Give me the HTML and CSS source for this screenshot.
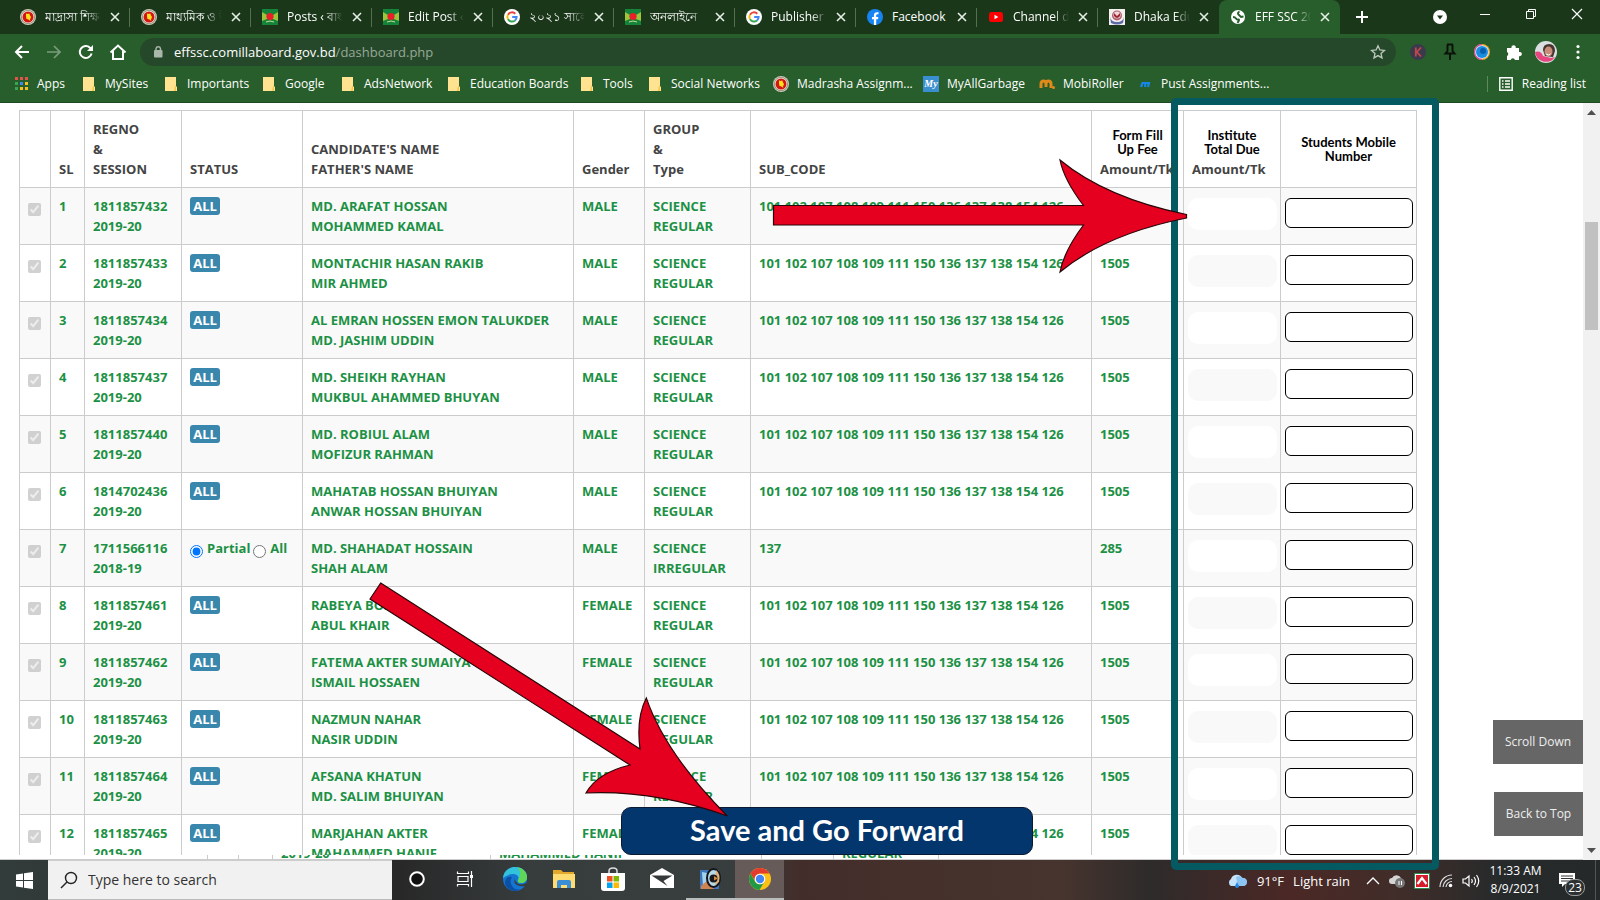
FILE: index.html
```html
<!DOCTYPE html>
<html lang="en">
<head>
<meta charset="utf-8">
<title>EFF SSC 2021</title>
<link rel="stylesheet" href="styles.css">
</head>
<body>
<svg class="defs" width="0" height="0" aria-hidden="true">
  <symbol id="seal" viewBox="0 0 16 16"><circle cx="8" cy="8" r="8" fill="#cfcabd"/><circle cx="8" cy="8" r="7" fill="#8c8a70"/><circle cx="8" cy="8" r="6.200" fill="#f3ece0"/><circle cx="8" cy="8" r="5.500" fill="#d3150f"/><path d="M6 4.500l2 .6 1.200-.8.8 2.200 1 1.500-1 2.500.3 1.500L8.500 10.500 6.500 10 6 7.500z" fill="#ffe01f"/></symbol>
  <symbol id="flag" viewBox="0 0 16 16"><path fill="#14843a" d="M0 0h16v16H0z"/><path d="M0 3l5 3h6l5-3v9l-5-2H5l-5 2z" fill="#9bc53a"/><circle cx="8" cy="7.500" r="3.600" fill="#e8202a"/><path d="M4 13q4-2 8 0" stroke="#c8dc90" fill="none"/></symbol>
  <symbol id="goog" viewBox="0 0 16 16"><circle cx="8" cy="8" r="8" fill="#fff"/><g fill="none" stroke-width="2"><path d="M11.300 4.700A4.600 4.600 0 0 0 4 5.700" stroke="#ea4335"/><path d="M4 5.700a4.600 4.600 0 0 0 0 4.600" stroke="#fbbc05"/><path d="M4 10.300a4.600 4.600 0 0 0 7 1.100" stroke="#34a853"/><path d="M11 11.400A4.500 4.500 0 0 0 12.600 8H8.200" stroke="#4285f4"/></g></symbol>
  <symbol id="x" viewBox="0 0 10 10"><path d="M1 1l8 8M9 1l-8 8" stroke="#e6efe6" stroke-width="1.600" fill="none"/></symbol>
  <symbol id="folder" viewBox="0 0 12 14"><path d="M0 0h11v9l1 1v4H0z" fill="#ffe391"/><path d="M11 9v5h-2l1-5z" fill="#f5c64e"/></symbol>
</svg>

<header class="chrome">
  <div class="tabstrip">
    <nav class="tabs" aria-label="Tabs">
      <div class="tab"><svg class="fav"><use href="#seal"/></svg><span class="tab-title">মাদ্রাসা শিক্ষা</span><button class="tab-x" aria-label="Close"><svg><use href="#x"/></svg></button></div>
      <div class="tab"><svg class="fav"><use href="#seal"/></svg><span class="tab-title">মাধ্যমিক ও উচ্চ</span><button class="tab-x" aria-label="Close"><svg><use href="#x"/></svg></button></div>
      <div class="tab"><svg class="fav"><use href="#flag"/></svg><span class="tab-title">Posts ‹ বাংলা</span><button class="tab-x" aria-label="Close"><svg><use href="#x"/></svg></button></div>
      <div class="tab"><svg class="fav"><use href="#flag"/></svg><span class="tab-title">Edit Post ‹ বা</span><button class="tab-x" aria-label="Close"><svg><use href="#x"/></svg></button></div>
      <div class="tab"><svg class="fav"><use href="#goog"/></svg><span class="tab-title">২০২১ সালের</span><button class="tab-x" aria-label="Close"><svg><use href="#x"/></svg></button></div>
      <div class="tab"><svg class="fav"><use href="#flag"/></svg><span class="tab-title">অনলাইনে</span><button class="tab-x" aria-label="Close"><svg><use href="#x"/></svg></button></div>
      <div class="tab"><svg class="fav"><use href="#goog"/></svg><span class="tab-title">Publisher Center</span><button class="tab-x" aria-label="Close"><svg><use href="#x"/></svg></button></div>
      <div class="tab"><svg class="fav" viewBox="0 0 16 16"><circle cx="8" cy="8" r="8" fill="#1684f2"/><path d="M6.900 16V10.300H5V8h1.900V6.300c0-2 1.200-3.100 3-3.100l1.600.1v2h-1c-1 0-1.300.6-1.300 1.200V8h2.200l-.4 2.300H9.200V16z" fill="#fff"/></svg><span class="tab-title plain">Facebook</span><button class="tab-x" aria-label="Close"><svg><use href="#x"/></svg></button></div>
      <div class="tab"><svg class="fav" viewBox="0 0 16 16"><rect x="1" y="3" width="14" height="10" rx="2.500" fill="#f00"/><path d="M6.500 5.800v4.400L10.300 8z" fill="#fff"/></svg><span class="tab-title">Channel dashboard</span><button class="tab-x" aria-label="Close"><svg><use href="#x"/></svg></button></div>
      <div class="tab last"><svg class="fav" viewBox="0 0 16 16"><path fill="#f5f1f1" d="M0 0h16v16H0z"/><path d="M1 8q1 5 7 5t7-5l-1 6q-6 3-12 0z" fill="#5c6aa8"/><circle cx="8" cy="6.500" r="5" fill="#b0606c"/><circle cx="8" cy="6" r="3.600" fill="#ecdada"/><path d="M5 4v3q3 4 6 0V4L8 7z" fill="#a02636"/></svg><span class="tab-title">Dhaka Education</span><button class="tab-x" aria-label="Close"><svg><use href="#x"/></svg></button></div>
      <div class="tab active"><svg class="fav" viewBox="0 0 16 16"><circle cx="8" cy="8" r="7" fill="#fff"/><path d="M3 8q2 0 3 1.500t2.500 1-1 3.500M9.500 2.500Q7 4 8.500 5.500T11 8l2.500-.5" fill="none" stroke="#285e2b" stroke-width="1.900"/></svg><span class="tab-title">EFF SSC 2021</span><button class="tab-x" aria-label="Close"><svg><use href="#x"/></svg></button></div>
    </nav>
    <button class="newtab" aria-label="New tab"><svg width="14" height="14" viewBox="0 0 14 14"><path d="M7 1v12M1 7h12" stroke="#fff" stroke-width="2"/></svg></button>
    <div class="winctl">
      <button aria-label="Search tabs"><svg width="16" height="20" viewBox="0 0 16 20"><circle cx="9" cy="13" r="7" fill="#fff"/><path d="M6 11.500h6L9 15.500z" fill="#1b371b"/></svg></button>
      <button aria-label="Minimize"><svg width="12" height="12" viewBox="0 0 12 12"><path d="M1 6.500h10" stroke="#fff"/></svg></button>
      <button aria-label="Restore"><svg width="12" height="12" viewBox="0 0 12 12"><path d="M1.500 3.500h7v7h-7zM3.500 3.500v-2h7v7h-2" fill="none" stroke="#fff"/></svg></button>
      <button aria-label="Close window"><svg width="12" height="12" viewBox="0 0 12 12"><path d="M1 1l10 10M11 1L1 11" stroke="#fff" stroke-width="1.200"/></svg></button>
    </div>
  </div>

  <div class="toolbar">
    <button aria-label="Back"><svg width="16" height="16" viewBox="0 0 16 16"><path d="M15 8H2M8 2L2 8l6 6" fill="none" stroke="#fff" stroke-width="2"/></svg></button>
    <button aria-label="Forward"><svg width="16" height="16" viewBox="0 0 16 16"><path d="M1 8h13M8 2l6 6-6 6" fill="none" stroke="#7c9d7d" stroke-width="1.700"/></svg></button>
    <button aria-label="Reload"><svg width="16" height="16" viewBox="0 0 16 16"><path d="M13.600 9.500A6 6 0 1 1 12 3.700l1.500 1.500" fill="none" stroke="#fff" stroke-width="2"/><path d="M15 1v6H9z" fill="#fff"/></svg></button>
    <button aria-label="Home"><svg width="18" height="16" viewBox="0 0 18 16"><path d="M1.500 8.500L9 1.500l7.500 7M4 7v8h10V7" fill="none" stroke="#fff" stroke-width="2"/></svg></button>
    <div class="omnibox"><svg width="10" height="13" viewBox="0 0 10 13"><rect x="1" y="5" width="8.500" height="7.500" rx="1" fill="#a9b8aa"/><path d="M3 5V3.500a2.300 2.300 0 0 1 4.500 0V5" fill="none" stroke="#a9b8aa" stroke-width="1.400"/></svg>
      <span class="url">effssc.comillaboard.gov.bd<span>/dashboard.php</span></span>
      <svg width="16" height="16" viewBox="0 0 16 16"><path d="M8 1.800l1.900 4.200 4.500.4-3.400 3 1 4.500L8 11.600l-4 2.300 1-4.500-3.400-3 4.500-.4z" fill="none" stroke="#bccabd" stroke-width="1.300"/></svg></div>
    <div class="ext">
      <svg viewBox="0 0 18 18"><circle cx="9" cy="9" r="8" fill="#3b3a4c"/><path d="M6.800 4.500v9M12 4.500L7.800 9l4.200 4.500" stroke="#c0474b" stroke-width="1.800" fill="none"/></svg>
      <svg viewBox="0 0 18 18"><path d="M6 1.500h6M6.500 1.500V8L4.500 10.500h9L11.500 8V1.500M9 10.500V17" fill="none" stroke="#0a120a" stroke-width="2"/></svg>
      <svg viewBox="0 0 18 18"><circle cx="9" cy="9" r="8" fill="#f4a52b"/><path d="M9 1a8 8 0 0 0 0 16z" fill="#d44ba0"/><circle cx="9" cy="9" r="6.800" fill="#d8effa"/><circle cx="9" cy="9" r="6" fill="#1b8de0"/><circle cx="10" cy="8" r="3" fill="#0c5fae"/></svg>
      <svg viewBox="0 0 18 18"><path d="M2 5h4.500a2.200 2.200 0 1 1 4.200 0H14v4a2.200 2.200 0 1 1 0 4.200V17h-4a2.200 2.200 0 0 0-4.300 0H2v-4a2.200 2.200 0 0 0 0-4z" fill="#fff"/></svg>
      <svg class="avatar" viewBox="0 0 22 22"><circle cx="11" cy="11" r="11" fill="#d9dfe0"/><path d="M0 11q6-2 8 4l8 2 4-1a11 11 0 0 1-20-5z" fill="#e8457f"/><path d="M8 9q0-6 6-6t6 7l-2 6-8-1z" fill="#47332f"/><ellipse cx="13.500" cy="10.500" rx="4" ry="5" fill="#c98c78"/><path d="M11 13q2.500 2 4.500 0" stroke="#fff" fill="none"/></svg>
      <svg viewBox="0 0 18 18"><g fill="#fff"><circle cx="9" cy="3.500" r="1.600"/><circle cx="9" cy="9" r="1.600"/><circle cx="9" cy="14.500" r="1.600"/></g></svg>
    </div>
  </div>

  <nav class="bookmarks" aria-label="Bookmarks">
    <a href="#"><svg width="14" height="14" viewBox="0 0 14 14"><path d="M0 0h3v3H0zM5 0h3v3H5zM10 0h3v3h-3z" fill="#e5534b"/><path d="M0 5h3v3H0z" fill="#34a853"/><path d="M5 5h3v3H5z" fill="#4285f4"/><path d="M10 5h3v3h-3z" fill="#f6bf26"/><path d="M0 10h3v3H0z" fill="#34a853"/><path d="M5 10h3v3H5zM10 10h3v3h-3z" fill="#f6bf26"/></svg>Apps</a>
    <a href="#"><svg class="fold"><use href="#folder"/></svg>MySites</a>
    <a href="#"><svg class="fold"><use href="#folder"/></svg>Importants</a>
    <a href="#"><svg class="fold"><use href="#folder"/></svg>Google</a>
    <a href="#"><svg class="fold"><use href="#folder"/></svg>AdsNetwork</a>
    <a href="#"><svg class="fold"><use href="#folder"/></svg>Education Boards</a>
    <a href="#"><svg class="fold"><use href="#folder"/></svg>Tools</a>
    <a href="#"><svg class="fold"><use href="#folder"/></svg>Social Networks</a>
    <a href="#"><svg class="fav"><use href="#seal"/></svg>Madrasha Assignm...</a>
    <a href="#"><span class="my">My</span>MyAllGarbage</a>
    <a href="#"><svg class="fav" viewBox="0 0 16 16"><path d="M2 12V8q0-3 2.500-3T7 8v3M7 8q0-3 2.500-3T12 8v4" fill="none" stroke="#e08a1b" stroke-width="3"/><circle cx="14.500" cy="11.500" r="1.500" fill="#e08a1b"/></svg>MobiRoller</a>
    <a href="#"><svg class="fav" viewBox="0 0 16 16"><path d="M4 11l1.500-4h3L8 11M8.500 7h3.500l-1 4" fill="none" stroke="#1685e8" stroke-width="2.200"/></svg>Pust Assignments...</a>
    <a href="#" class="reading"><svg width="14" height="14" viewBox="0 0 14 14"><path d="M.8.8h12.400v12.400H.8z" fill="none" stroke="#fff" stroke-width="1.400"/><path d="M3 4h1.500M3 7h1.500M3 10h1.500M6 4h5M6 7h5M6 10h5" stroke="#fff" stroke-width="1.400"/></svg>Reading list</a>
  </nav>
</header>

<main class="page">
  <div class="content">
    <div class="table-view">
      <table class="grid">
        <colgroup><col class="c-check"><col class="c-sl"><col class="c-reg"><col class="c-status"><col class="c-name"><col class="c-gender"><col class="c-group"><col class="c-sub"><col class="c-fee"><col class="c-due"><col class="c-mobile"></colgroup>
        <thead><tr><th></th><th>SL</th><th>REGNO<br>&amp;<br>SESSION</th><th>STATUS</th><th>CANDIDATE'S NAME<br>FATHER'S NAME</th><th>Gender</th><th>GROUP<br>&amp;<br>Type</th><th>SUB_CODE</th><th><span class="cap">Form Fill<br>Up Fee</span>Amount/Tk</th><th><span class="cap">Institute<br>Total Due</span>Amount/Tk</th><th class="mid"><span class="cap">Students Mobile<br>Number</span></th></tr></thead>
        <tbody>
          <tr><td><input type="checkbox" checked disabled aria-label="Select 1"></td><td>1</td><td>1811857432<br>2019-20</td><td><span class="badge">ALL</span></td><td>MD. ARAFAT HOSSAN<br>MOHAMMED KAMAL</td><td>MALE</td><td>SCIENCE<br>REGULAR</td><td>101 102 107 108 109 111 150 136 137 138 154 126</td><td>1505</td><td class="in"><input class="due" aria-label="Institute due 1"></td><td class="in"><input class="mob" aria-label="Mobile 1"></td></tr>
          <tr><td><input type="checkbox" checked disabled aria-label="Select 2"></td><td>2</td><td>1811857433<br>2019-20</td><td><span class="badge">ALL</span></td><td>MONTACHIR HASAN RAKIB<br>MIR AHMED</td><td>MALE</td><td>SCIENCE<br>REGULAR</td><td>101 102 107 108 109 111 150 136 137 138 154 126</td><td>1505</td><td class="in"><input class="due" aria-label="Institute due 2"></td><td class="in"><input class="mob" aria-label="Mobile 2"></td></tr>
          <tr><td><input type="checkbox" checked disabled aria-label="Select 3"></td><td>3</td><td>1811857434<br>2019-20</td><td><span class="badge">ALL</span></td><td>AL EMRAN HOSSEN EMON TALUKDER<br>MD. JASHIM UDDIN</td><td>MALE</td><td>SCIENCE<br>REGULAR</td><td>101 102 107 108 109 111 150 136 137 138 154 126</td><td>1505</td><td class="in"><input class="due" aria-label="Institute due 3"></td><td class="in"><input class="mob" aria-label="Mobile 3"></td></tr>
          <tr><td><input type="checkbox" checked disabled aria-label="Select 4"></td><td>4</td><td>1811857437<br>2019-20</td><td><span class="badge">ALL</span></td><td>MD. SHEIKH RAYHAN<br>MUKBUL AHAMMED BHUYAN</td><td>MALE</td><td>SCIENCE<br>REGULAR</td><td>101 102 107 108 109 111 150 136 137 138 154 126</td><td>1505</td><td class="in"><input class="due" aria-label="Institute due 4"></td><td class="in"><input class="mob" aria-label="Mobile 4"></td></tr>
          <tr><td><input type="checkbox" checked disabled aria-label="Select 5"></td><td>5</td><td>1811857440<br>2019-20</td><td><span class="badge">ALL</span></td><td>MD. ROBIUL ALAM<br>MOFIZUR RAHMAN</td><td>MALE</td><td>SCIENCE<br>REGULAR</td><td>101 102 107 108 109 111 150 136 137 138 154 126</td><td>1505</td><td class="in"><input class="due" aria-label="Institute due 5"></td><td class="in"><input class="mob" aria-label="Mobile 5"></td></tr>
          <tr><td><input type="checkbox" checked disabled aria-label="Select 6"></td><td>6</td><td>1814702436<br>2019-20</td><td><span class="badge">ALL</span></td><td>MAHATAB HOSSAN BHUIYAN<br>ANWAR HOSSAN BHUIYAN</td><td>MALE</td><td>SCIENCE<br>REGULAR</td><td>101 102 107 108 109 111 150 136 137 138 154 126</td><td>1505</td><td class="in"><input class="due" aria-label="Institute due 6"></td><td class="in"><input class="mob" aria-label="Mobile 6"></td></tr>
          <tr><td><input type="checkbox" checked disabled aria-label="Select 7"></td><td>7</td><td>1711566116<br>2018-19</td><td class="choice"><label><input type="radio" name="s7" checked>Partial</label><label><input type="radio" name="s7">All</label></td><td>MD. SHAHADAT HOSSAIN<br>SHAH ALAM</td><td>MALE</td><td>SCIENCE<br>IRREGULAR</td><td>137</td><td>285</td><td class="in"><input class="due" aria-label="Institute due 7"></td><td class="in"><input class="mob" aria-label="Mobile 7"></td></tr>
          <tr><td><input type="checkbox" checked disabled aria-label="Select 8"></td><td>8</td><td>1811857461<br>2019-20</td><td><span class="badge">ALL</span></td><td>RABEYA BOSRI<br>ABUL KHAIR</td><td>FEMALE</td><td>SCIENCE<br>REGULAR</td><td>101 102 107 108 109 111 150 136 137 138 154 126</td><td>1505</td><td class="in"><input class="due" aria-label="Institute due 8"></td><td class="in"><input class="mob" aria-label="Mobile 8"></td></tr>
          <tr><td><input type="checkbox" checked disabled aria-label="Select 9"></td><td>9</td><td>1811857462<br>2019-20</td><td><span class="badge">ALL</span></td><td>FATEMA AKTER SUMAIYA<br>ISMAIL HOSSAEN</td><td>FEMALE</td><td>SCIENCE<br>REGULAR</td><td>101 102 107 108 109 111 150 136 137 138 154 126</td><td>1505</td><td class="in"><input class="due" aria-label="Institute due 9"></td><td class="in"><input class="mob" aria-label="Mobile 9"></td></tr>
          <tr><td><input type="checkbox" checked disabled aria-label="Select 10"></td><td>10</td><td>1811857463<br>2019-20</td><td><span class="badge">ALL</span></td><td>NAZMUN NAHAR<br>NASIR UDDIN</td><td>FEMALE</td><td>SCIENCE<br>REGULAR</td><td>101 102 107 108 109 111 150 136 137 138 154 126</td><td>1505</td><td class="in"><input class="due" aria-label="Institute due 10"></td><td class="in"><input class="mob" aria-label="Mobile 10"></td></tr>
          <tr><td><input type="checkbox" checked disabled aria-label="Select 11"></td><td>11</td><td>1811857464<br>2019-20</td><td><span class="badge">ALL</span></td><td>AFSANA KHATUN<br>MD. SALIM BHUIYAN</td><td>FEMALE</td><td>SCIENCE<br>REGULAR</td><td>101 102 107 108 109 111 150 136 137 138 154 126</td><td>1505</td><td class="in"><input class="due" aria-label="Institute due 11"></td><td class="in"><input class="mob" aria-label="Mobile 11"></td></tr>
          <tr><td><input type="checkbox" checked disabled aria-label="Select 12"></td><td>12</td><td>1811857465<br>2019-20</td><td><span class="badge">ALL</span></td><td>MARJAHAN AKTER<br>MAHAMMED HANIF</td><td>FEMALE</td><td>SCIENCE<br>REGULAR</td><td>101 102 107 108 109 111 150 136 137 138 154 126</td><td>1505</td><td class="in"><input class="due" aria-label="Institute due 12"></td><td class="in"><input class="mob" aria-label="Mobile 12"></td></tr>
        </tbody>
      </table>
    </div>
    <div class="sliver"><span></span><span></span><span></span><span>2019-20</span><span></span><span>MAHAMMED HANIF</span><span></span><span>REGULAR</span><span></span></div>
    <button class="save">Save and Go Forward</button>
    <div class="jump"><button>Scroll Down</button><button class="top">Back to Top</button></div>
  </div>
  <div class="scrollbar"><svg width="9" height="5" viewBox="0 0 9 5"><path d="M0 5L4.500 0 9 5z" fill="#505050"/></svg><div class="thumb"></div><svg width="9" height="5" viewBox="0 0 9 5"><path d="M0 0l4.500 5L9 0z" fill="#505050"/></svg></div>
</main>

<footer class="taskbar">
  <button class="start" aria-label="Start"><svg width="17" height="17" viewBox="0 0 17 17"><path d="M0 2.400L7 1.400V8H0zM8 1.300L17 0v8H8zM0 9h7v6.600l-7-1zM8 9h9v8l-9-1.300z" fill="#fff"/></svg></button>
  <label class="search"><svg width="18" height="18" viewBox="0 0 18 18"><circle cx="11" cy="7" r="5.500" fill="none" stroke="#222" stroke-width="1.400"/><path d="M7 11L1 17" stroke="#222" stroke-width="1.400"/></svg><input placeholder="Type here to search" aria-label="Search"></label>
  <div class="apps">
    <button aria-label="Cortana"><svg viewBox="0 0 24 24"><circle cx="12" cy="12" r="6.800" fill="#111" stroke="#fff" stroke-width="2"/></svg></button>
    <button aria-label="Task view"><svg viewBox="0 0 24 24"><path d="M3.500 7V4.500M14.500 7V4.500M3.500 17v2.500M14.500 17v2.500M3.500 6.500h11M3.500 17.500h11M4 9.500h10v5H4zM17.500 4v16" fill="none" stroke="#fff" stroke-width="1.200"/><path d="M16 8h3v3h-3z" fill="#fff"/></svg></button>
    <button aria-label="Edge"><svg viewBox="0 0 24 24"><circle cx="12" cy="12" r="12" fill="#1474cf"/><path d="M0 11C1 3 7 0 12 0c8 0 12 5 12 10 0 4-3 6-6 6-2 0-4-1-3-3 2-4-2-6-5-6-4 0-7 2-10 4z" fill="#33c2dc"/><path d="M14 .200c6 1 10 5 10 9.800 0 4-3 6-6 6-2 0-4-1-3-3C17 9 19 4 14 .200z" fill="#5fd65a"/><path d="M9 10q-3 4 0 9t9 3q-6 4-12 0T3 12q2-3 6-2z" fill="#0c50a4"/><path d="M12 11q-1 2 2 5t9 0q1 1-1 3-4 1-8-1t-2-7z" fill="#353a3b"/></svg></button>
    <button aria-label="File Explorer"><svg viewBox="0 0 24 24"><path d="M1 3h8l2 2h11v16H1z" fill="#e3a82b"/><path d="M1 7h22v14H1z" fill="#ffdc72"/><path d="M5 21v-6q0-2 2-2h10q2 0 2 2v6h-4v-3H9v3z" fill="#3a8ed6"/></svg></button>
    <button aria-label="Store"><svg viewBox="0 0 24 24"><path d="M8 7V4q0-3 4-3t4 3v3" fill="none" stroke="#ddd" stroke-width="1.500"/><path d="M0 6h24v15q0 3-3 3H3q-3 0-3-3z" fill="#fff"/><path d="M6 9h5.500v5.500H6z" fill="#f25022"/><path d="M12.500 9H18v5.500h-5.500z" fill="#7fba00"/><path d="M6 15.500h5.500V21H6z" fill="#00a4ef"/><path d="M12.500 15.500H18V21h-5.500z" fill="#ffb900"/></svg></button>
    <button aria-label="Mail"><svg viewBox="0 0 24 24"><path d="M0 8l12-7 12 7v13H0z" fill="#fff"/><path d="M1.500 8.500h21L13.500 14l4 5z" fill="#343838"/></svg></button>
    <button class="open" aria-label="Photo editor"><svg viewBox="0 0 24 24"><path d="M1 3h19v19H1z" fill="#3f77bb"/><path d="M3 5l10 2 5 13H4z" fill="#a3d4ef"/><path d="M2 19l7-6 6 9H2z" fill="#ce8350"/><ellipse cx="14.500" cy="11" rx="6.500" ry="9" fill="#b9d8e6" stroke="#14161b" stroke-width="2"/><path d="M17 3q5 4 3 12l-4 3z" fill="#e0b27a"/><circle cx="14.500" cy="11.500" r="4" fill="#17191e"/><path d="M15 9l4 2.500-4 2z" fill="#d48936"/></svg></button>
    <button class="open current" aria-label="Chrome"><svg viewBox="0 0 24 24"><circle cx="12" cy="12" r="11" fill="#fbc116"/><path d="M2.500 6.500A11 11 0 0 1 21.500 6.500H12a5.500 5.500 0 0 0-5 7.500z" fill="#e33b2e"/><path d="M2.500 6.500A11 11 0 0 0 11.500 23l5-8.500a5.500 5.500 0 0 1-9.500 0z" fill="#229a45"/><circle cx="12" cy="12" r="5.300" fill="#fff"/><circle cx="12" cy="12" r="4.200" fill="#4285f4"/></svg></button>
  </div>
  <div class="tray">
    <svg width="20" height="16" viewBox="0 0 20 16"><path d="M4 13a4 4 0 0 1 0-7 6 6 0 0 1 11-1 4 4 0 0 1 1 8z" fill="#c7e3fa"/><path d="M9 4a6 5 0 0 1 7 1 4 4 0 0 1 0 8h-5z" fill="#8cc4f3"/><path d="M10 9l2 4a2 2 0 1 1-4 0z" fill="#2488e2"/></svg>
    <span class="weather">91°F<span>Light rain</span></span>
    <svg width="14" height="8" viewBox="0 0 14 8"><path d="M1 7l6-6 6 6" fill="none" stroke="#fff" stroke-width="1.300"/></svg>
    <svg width="16" height="14" viewBox="0 0 16 14"><path d="M3 10a3 3 0 0 1 0-6 5 5 0 0 1 9 0l1 6z" fill="#d5d5d5"/><circle cx="11" cy="9" r="5" fill="#777"/><path d="M10 7v4M12.500 7v4" stroke="#fff"/></svg>
    <svg width="16" height="16" viewBox="0 0 16 16"><path fill="#2f8a4d" d="M0 0h16v16H0z"/><path fill="#fff" d="M1 1h14v14H1z"/><path fill="#d71d2b" d="M2 2h12v12H2z"/><path d="M3.500 11L8 5l4.500 6" fill="none" stroke="#fff" stroke-width="2.200"/></svg>
    <svg width="14" height="14" viewBox="0 0 14 14"><g fill="none" stroke="#ddd" stroke-width="1.200"><path d="M1 13A12 12 0 0 1 13 1M4 13a9 9 0 0 1 9-8.500M7 13a6 6 0 0 1 6-5.500"/></g><circle cx="11.500" cy="11.500" r="1.800" fill="#fff"/></svg>
    <svg width="18" height="14" viewBox="0 0 18 14"><path d="M1 5h2.500L7 2v10L3.500 9H1z" fill="none" stroke="#fff" stroke-width="1.200"/><path d="M9.500 5q1.500 2 0 4M12 3q3 4 0 8M14.500 1q4.500 6 0 12" fill="none" stroke="#fff" stroke-width="1.200"/></svg>
  </div>
  <div class="clock">11:33 AM<br>8/9/2021</div>
  <button class="notif" aria-label="Notifications"><svg width="17" height="17" viewBox="0 0 17 17"><path d="M0 1h16v11H6l-3 3v-3H0z" fill="#fff"/><path d="M2 4h12M2 6.500h12M2 9h8" stroke="#333"/></svg><span>23</span></button>
</footer>

<div class="frame"></div>
<svg class="arrows" viewBox="0 0 1600 900" aria-hidden="true">
  <g fill="#e6001f" stroke="#2a0508" stroke-width="1.200">
    <path d="M773.500 205.500H1083.500Q1064 180 1060 160Q1106 198 1186.500 214.500V218Q1106 234 1060 272Q1064 251 1083.500 225H773.500z"/>
    <path d="M380.700 583L640 749Q636 718 646.300 698Q665 753 727.300 816Q655 790 586 793Q597 773 630 765L370 599z"/>
  </g>
</svg>
</body>
</html>
```
FILE: styles.css
```css
* { box-sizing: border-box; }
body { margin: 0; height: 100vh; display: flex; flex-direction: column; overflow: hidden; position: relative; background: #fff; font: 12px/16px "Open Sans", "Noto Sans", sans-serif; }
button { border: 0; padding: 0; margin: 0; background: none; font: inherit; color: inherit; display: flex; align-items: center; justify-content: center; }
svg { flex: none; display: block; }
.defs { position: absolute; }

.chrome { flex: none; color: #fff; background: #285e2b; border-bottom: 1px solid #1f4a22; }
.tabstrip { display: flex; height: 34px; background: #1a371a; padding-left: 9px; }
.tabs { display: flex; }
.tab { width: 121px; display: flex; align-items: center; gap: 9px; padding: 0 10px 0 11px; background: linear-gradient(#54704f, #54704f) right center / 1px 19px no-repeat; }
.tab.last { background: none; }
.tab.active { background: #285e2b; border-radius: 8px 8px 0 0; }
.fav { width: 16px; height: 16px; }
.tab-title { flex: 1; white-space: nowrap; overflow: hidden; -webkit-mask-image: linear-gradient(90deg, #000 72%, transparent); mask-image: linear-gradient(90deg, #000 72%, transparent); }
.tab-title.plain { -webkit-mask-image: none; mask-image: none; }
.tab-x svg { width: 10px; height: 10px; }
.newtab { width: 44px; }
.winctl { margin-left: auto; display: flex; height: 28px; }
.winctl button { width: 46px; }

.toolbar { display: flex; align-items: center; height: 35px; padding: 0 13px 0 6px; }
.toolbar > button { width: 32px; height: 28px; }
.omnibox { flex: 1; display: flex; align-items: center; height: 28px; margin: 0 13px 0 6px; padding: 0 10px 0 13px; border-radius: 14px; background: #26482a; }
.url { flex: 1; margin-left: 11px; font-size: 13px; }
.url span { color: #97a998; }
.ext { display: flex; align-items: center; gap: 14px; }
.ext svg { width: 18px; height: 18px; }
.ext .avatar { width: 22px; height: 22px; margin: 0 -2px; }

.bookmarks { display: grid; grid-template-columns: 68px 82px 98px 79px 106px 133px 68px 124px 150px 116px 98px 1fr auto; align-items: center; height: 33px; padding: 0 14px 3px 15px; }
.bookmarks a { display: flex; align-items: center; gap: 8px; color: #fff; text-decoration: none; white-space: nowrap; }
.fold { width: 12px; height: 14px; margin-right: 2px; }
.my { width: 16px; height: 16px; background: #3a8fd0; font: italic bold 10px/16px "Liberation Serif", serif; text-align: center; }
.bookmarks .reading { border-left: 1px solid #5c8a5e; padding-left: 11px; gap: 9px; }

.page { flex: 1; min-height: 0; display: flex; }
.content { flex: 1; min-width: 0; display: flex; flex-direction: column; position: relative; }
.table-view { flex: 1; min-height: 0; overflow: hidden; padding: 7px 166px 0 19px; }
.grid { width: 100%; table-layout: fixed; border-collapse: collapse; font-size: 13px; line-height: 20px; font-weight: 700; color: #1c9145; }
.c-check { width: 31px; } .c-sl { width: 34px; } .c-reg { width: 97px; } .c-status { width: 121px; } .c-name { width: 271px; } .c-gender { width: 71px; } .c-group { width: 106px; } .c-fee { width: 92px; } .c-due { width: 97px; } .c-mobile { width: 136px; }
.grid th, .grid td { border: 1px solid #ccc; padding: 8px 0 8px 8px; text-align: left; vertical-align: top; white-space: nowrap; height: 57px; }
.grid th { vertical-align: bottom; color: #444; height: 77px; }
.grid th.mid { vertical-align: middle; padding: 0; }
.cap { display: block; font: 700 13px/14px Lato, sans-serif; color: #000; text-align: center; margin: 0 0 3px -8px; }
.mid .cap { margin: 0; }
.grid tbody tr:nth-child(odd) { background: #f9f9f9; }
.grid input[type=checkbox] { display: block; width: 13px; height: 13px; margin: 7px 0 0; }
.badge { display: block; width: 30px; height: 18px; margin-top: 1px; border-radius: 3px; background: #3a87ad; color: #fff; line-height: 18px; text-align: center; }
.choice input { width: 13px; height: 13px; margin: 0 4px 0 0; vertical-align: -5px; }
.choice label + label { margin-left: 3px; }
.grid td.in { padding: 10px 3px 0 4px; }
.mob, .due { display: block; width: 100%; height: 30px; border-radius: 6px; background: #fff; border: 1px solid #000; }
.due { border: 0; border-radius: 10px; height: 32px; }
tr:nth-child(even) .due { background: #f9f9f9; }

.sliver { flex: none; height: 5px; overflow: hidden; display: grid; align-content: end; grid-template-columns: 208px 31px 34px 97px 121px 271px 72px 105px 1fr; padding-right: 644px; font-size: 13px; font-weight: 700; color: #1c9145; border-bottom: 1px solid #ccc; }
.sliver span { border-right: 1px solid #ccc; height: 16px; padding-left: 8px; line-height: 20px; white-space: nowrap; }
.sliver span:last-child { border-right: 0; }

.save { position: absolute; left: 621px; bottom: 5px; width: 412px; height: 48px; padding-bottom: 2px; border-radius: 10px; border: 1px solid #0a1a33; background: #03366c; color: #fff; font: 700 29px/40px Lato, sans-serif; }
.jump { position: absolute; right: 0; bottom: 24px; display: flex; flex-direction: column; align-items: flex-end; gap: 28px; color: #eee; }
.jump button { width: 90px; height: 44px; background: #666; }
.jump .top { width: 89px; }
.scrollbar { flex: none; width: 17px; background: #f1f1f1; display: flex; flex-direction: column; align-items: center; padding: 7px 0; }
.thumb { width: 13px; height: 108px; background: #c1c1c1; margin: 107px 0 auto; }

.taskbar { flex: none; height: 40px; display: flex; color: #fff; background: linear-gradient(90deg, #323c3b 0, #282828 400px, #373c3d 530px, #383e3e 740px, #432d2a 800px, #47342e 1060px, #2e2b2b 1150px, #4b2825 1290px, #402d29 1400px, #272a2b 1500px, #25292a 1600px); }
.start { width: 48px; }
.search { width: 344px; display: flex; align-items: center; gap: 10px; padding-left: 12px; background: #f1f1f1; border-top: 1px solid #ccc; border-bottom: 1px solid #bbb; }
.search input { flex: 1; min-width: 0; border: 0; padding: 0; background: none; outline: 0; font: 14px/20px "Open Sans", sans-serif; }
.search input::placeholder { color: #333; opacity: 1; }
.apps { display: flex; }
.apps button { width: 49px; border-bottom: 2px solid transparent; }
.apps svg { width: 24px; height: 24px; }
.apps .open { border-bottom-color: #b9bcbc; }
.apps .current { background: #675b5a; background-clip: border-box; }
.tray { margin-left: auto; display: flex; align-items: center; gap: 9px; padding-top: 2px; }
.weather { font-size: 13px; display: flex; gap: 9px; margin: 0 7px 0 1px; }
.clock { width: 71px; text-align: center; line-height: 18px; padding-top: 2px; }
.notif { width: 45px; margin-right: 4px; position: relative; justify-content: flex-start; padding-left: 8px; border-right: 1px solid #555; }
.notif > span { position: absolute; right: 10px; bottom: 4px; width: 20px; height: 17px; border: 1px solid #999; border-radius: 8px; background: #2c3031; font-size: 12px; line-height: 15px; }

.frame { position: absolute; left: 1171px; top: 98px; width: 268px; height: 772px; border: 7px solid #045a60; border-radius: 5px; pointer-events: none; }
.arrows { position: absolute; left: 0; top: 0; width: 1600px; height: 900px; pointer-events: none; }
```
